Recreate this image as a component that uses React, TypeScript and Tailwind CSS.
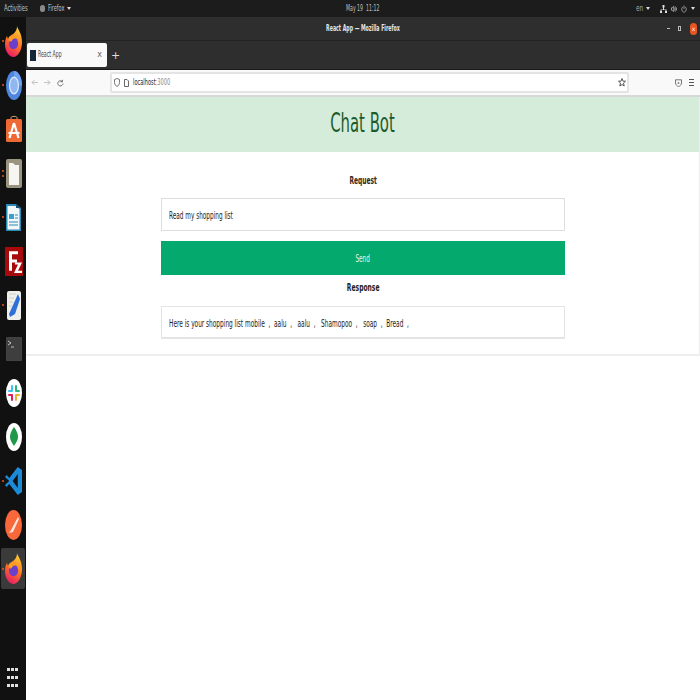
import { Volume2 } from 'lucide-react';

const font = { fontFamily: '"DejaVu Sans", sans-serif' } as const;

function FirefoxIcon() {
    return (
        <svg width="17" height="31" viewBox="0 0 24 32" preserveAspectRatio="none">
            <defs>
                <linearGradient id="ffg" x1="0.7" y1="0" x2="0.3" y2="1">
                    <stop offset="0" stopColor="#ffd23a" />
                    <stop offset="0.5" stopColor="#ff7a1f" />
                    <stop offset="1" stopColor="#e8176c" />
                </linearGradient>
            </defs>
            <path d="M17 0c1 4 7 7 7 17 0 8-6 15-12 15S0 26 0 19c0-4 1-7 3-9 0 2 1 3 2 3 1-3 5-4 7-5 3-2 5-4 5-8z" fill="url(#ffg)" />
            <ellipse cx="12" cy="18" rx="6.500" ry="6" fill="#6b3fc9" />
            <path d="M5 12c3-3 9-3 12 1-3-1-6 0-7 2-2 2-5 1-5-3z" fill="#ff9a26" />
        </svg>
    );
}

function ChromiumIcon() {
    return (
        <svg width="16" height="29" viewBox="0 0 18 28" preserveAspectRatio="none">
            <ellipse cx="9" cy="14" rx="9" ry="14" fill="#4f86e0" />
            <path d="M9 0C14 0 18 6 18 14L9 14z" fill="#6da0ee" />
            <ellipse cx="9" cy="14" rx="5" ry="8" fill="#8fb7f2" stroke="#d8e6fb" strokeWidth="1.400" />
        </svg>
    );
}

function AppStoreIcon() {
    return (
        <svg width="16" height="28" viewBox="0 0 16 28">
            <path d="M5 4V2.500C5 1 11 1 11 2.500V4" fill="none" stroke="#c9a27a" strokeWidth="1" />
            <rect y="4" width="16" height="23" rx="1.500" fill="#ee6a35" />
            <path d="M8 8 3.500 23M8 8l4.500 15M2.500 18h11" stroke="#fff" strokeWidth="2.200" fill="none" />
        </svg>
    );
}

function FilesIcon() {
    return (
        <svg width="16" height="29" viewBox="0 0 16 29">
            <rect width="16" height="29" rx="2" fill="#9a9481" />
            <path d="M3 4h4l2 2h4v20H3z" fill="#f6f5f2" />
        </svg>
    );
}

function WriterIcon() {
    return (
        <svg width="15" height="29" viewBox="0 0 15 29">
            <path d="M0 1h10l5 4v23H0z" fill="#2b89b5" />
            <path d="M1.500 3h8l4 3v20.500h-12z" fill="#f2f7fa" />
            <path d="M10 1l5 4h-5z" fill="#164e6f" />
            <rect x="3" y="11" width="5" height="5" fill="#3aa0cf" />
            <path d="M9 12h3M9 15h3M3 19h9M3 22h9" stroke="#2b89b5" strokeWidth="1.200" />
        </svg>
    );
}

function FileZillaIcon() {
    return (
        <svg width="18" height="29" viewBox="0 0 18 28" preserveAspectRatio="none">
            <rect width="18" height="28" fill="#a60a0a" />
            <path d="M4 4h9v3H7v5h5v3H7v8H4z" fill="#fff" />
            <path d="M10 15h7l-4 8h4v2H9l4-8h-3z" fill="#fff" />
        </svg>
    );
}

function EditorIcon() {
    return (
        <svg width="14" height="29" viewBox="0 0 14 29">
            <rect width="14" height="29" rx="2" fill="#eeeeea" />
            <path d="M2 3h7M2 7h5M2 11h4M2 15h3" stroke="#c9c9c4" strokeWidth="0.800" />
            <path d="M2 23l1 3 5-3 5-15-2-5z" fill="#2f6fd6" />
        </svg>
    );
}

function TerminalIcon() {
    return (
        <svg width="16" height="24" viewBox="0 0 16 24">
            <rect width="16" height="24" rx="2" fill="#3e3e3e" stroke="#555" strokeWidth="0.500" />
            <path d="M2 4l3 2-3 2" fill="none" stroke="#ddd" strokeWidth="0.800" />
            <path d="M5 10h3" stroke="#ddd" strokeWidth="0.800" />
        </svg>
    );
}

function SlackIcon() {
    return (
        <svg width="16" height="28" viewBox="0 0 16 28">
            <ellipse cx="8" cy="14" rx="8" ry="14" fill="#fff" />
            <path d="M6 7v5M3 12h3" stroke="#36c5f0" strokeWidth="2" strokeLinecap="round" />
            <path d="M10 7v5M10 12h3" stroke="#2eb67d" strokeWidth="2" strokeLinecap="round" />
            <path d="M3 16h3M6 16v5" stroke="#e01e5a" strokeWidth="2" strokeLinecap="round" />
            <path d="M10 16h3M10 16v5" stroke="#ecb22e" strokeWidth="2" strokeLinecap="round" />
        </svg>
    );
}

function MongoIcon() {
    return (
        <svg width="16" height="28" viewBox="0 0 16 28">
            <ellipse cx="8" cy="14" rx="8" ry="14" fill="#fff" />
            <path d="M8 4c3 4 4 7 4 10s-2 6-4 9c-2-3-4-6-4-9s1-6 4-10z" fill="#1f9a4a" />
        </svg>
    );
}

function VsCodeIcon() {
    return (
        <svg width="17" height="28" viewBox="0 0 20 28" preserveAspectRatio="none">
            <path d="M15 0l5 3v22l-5 3L5 17l-3 3-2-2 5-4-5-4 2-2 3 3z" fill="#1d8ad8" />
            <path d="M15 7v14l-6-7z" fill="#111" />
        </svg>
    );
}

function PostmanIcon() {
    return (
        <svg width="17" height="30" viewBox="0 0 17 30">
            <ellipse cx="8.500" cy="15" rx="8.500" ry="15" fill="#f9683a" />
            <path d="M13 7 6 20l-2 3 4-1 6-13z" fill="#fde5da" />
        </svg>
    );
}

const dockItems = [
    { icon: <ChromiumIcon />, dots: 1 },
    { icon: <AppStoreIcon />, dots: 0 },
    { icon: <FilesIcon />, dots: 2 },
    { icon: <WriterIcon />, dots: 1 },
    { icon: <FileZillaIcon />, dots: 0 },
    { icon: <EditorIcon />, dots: 1 },
    { icon: <TerminalIcon />, dots: 0 },
    { icon: <SlackIcon />, dots: 0 },
    { icon: <MongoIcon />, dots: 0 },
    { icon: <VsCodeIcon />, dots: 1 },
    { icon: <PostmanIcon />, dots: 0 },
];

function DockItem({ icon, dots }: { icon: React.ReactNode; dots: number }) {
    return (
        <div className="relative h-[44px] flex items-center justify-center">
            {dots > 0 && (
                <div className="absolute left-[1px] top-0 bottom-0 flex flex-col justify-center gap-[3px]">
                    {Array.from({ length: dots }).map((_, i) => (
                        <div key={i} className="w-[2px] h-[2px] rounded-full bg-[#e95420]" />
                    ))}
                </div>
            )}
            {icon}
        </div>
    );
}

function Dock() {
    return (
        <aside className="w-[26px] shrink-0 bg-[#111111] flex flex-col pl-[1px] pt-[2px]">
            <DockItem icon={<FirefoxIcon />} dots={1} />
            {dockItems.map((item, i) => (
                <DockItem key={i} icon={item.icon} dots={item.dots} />
            ))}
            <div className="relative mt-[1px] h-[41px] w-[24px] rounded-[2px] bg-[#3a3a3a] flex items-center justify-center">
                <div className="absolute left-[1px] w-[2px] h-[2px] rounded-full bg-[#e95420]" />
                <FirefoxIcon />
            </div>
            <div className="mt-auto mb-[13px] ml-[6px] grid grid-cols-3 w-[11px] gap-x-[1px] gap-y-[5px]">
                {Array.from({ length: 9 }).map((_, i) => (
                    <div key={i} className="w-[3px] h-[3px] bg-[#e0e0e0]" />
                ))}
            </div>
        </aside>
    );
}

function TopBar() {
    return (
        <header className="h-[17px] shrink-0 bg-[#1c1c1c] flex items-center text-[8px] text-[#c0c0c0] pl-[4px] pr-[5px] relative">
            <span className="inline-block w-[24px] origin-left scale-x-[.65] whitespace-pre">Activities</span>
            <span className="ml-[12px] w-[5px] h-[7px] rounded-full bg-[#8a8a8a]" />
            <span className="ml-[3px] inline-block w-[17px] origin-left scale-x-[.62] whitespace-pre">Firefox</span>
            <span className="ml-[2px] w-0 h-0 border-x-[2px] border-t-[3px] border-x-transparent border-t-[#ddd]" />
            <span className="absolute left-[26px] right-0 text-center">
                <span className="inline-block scale-x-[.58] whitespace-pre">May 19  11:12</span>
            </span>
            <span className="ml-auto inline-block w-[9px] origin-left scale-x-[.72] text-[#aaa]">en</span>
            <span className="ml-[1px] w-0 h-0 border-x-[2px] border-t-[3px] border-x-transparent border-t-[#ddd]" />
            <svg className="ml-[10px]" width="7" height="8" viewBox="0 0 7 8"><path d="M2.500 0h2v2.500h-2zM3 2.500h1v2H6.500V6H7v2H5V6h.5V5h-4v1H2v2H0V6h.5V4.500H3z" fill="#ddd" /></svg>
            <Volume2 className="ml-[4px] w-[6px] h-[8px] text-[#ccc]" strokeWidth={2.500} preserveAspectRatio="none" />
            <svg className="ml-[4px]" width="6" height="8" viewBox="0 0 8 8" preserveAspectRatio="none"><path d="M2.200 1.800a3 3 0 1 0 3.600 0M4 .500v3.500" fill="none" stroke="#bbb" strokeWidth="0.800" /></svg>
            <span className="ml-[4px] w-0 h-0 border-x-[2px] border-t-[3px] border-x-transparent border-t-[#ddd]" />
        </header>
    );
}

function BrowserChrome() {
    return (
        <>
            <div className="h-[24px] shrink-0 bg-[#2f2e2e] border-b border-[#222] flex items-center relative text-[8px] font-bold text-[#e5e5e5]">
                <span className="absolute left-0 right-0 text-center pt-[1px]">
                    <span className="inline-block scale-x-[.585] whitespace-pre">React App — Mozilla Firefox</span>
                </span>
                <div className="ml-auto flex items-center text-[#bbb] font-normal">
                    <span className="w-[3px] h-[1px] bg-[#bbb] mr-[8px]" />
                    <span className="w-[3px] h-[5px] border border-[#bbb] mr-[9px]" />
                    <span className="w-[7px] h-[12px] rounded-full bg-[#e95420] text-white text-[6px] flex items-center justify-center mr-[3px]">x</span>
                </div>
            </div>
            <div className="h-[29px] shrink-0 bg-[#2f2e2e] flex items-center border-b border-[#1a1a1a]">
                <div className="ml-[1px] w-[80px] h-[24px] bg-[#f9f9fa] rounded-[2px] flex items-center text-[8px] text-[#444] pl-[3px] pr-[5px]">
                    <span className="w-[6px] h-[11px] bg-[#14283a] mr-[2px]" />
                    <span className="inline-block w-[30px] origin-left scale-x-[.58] whitespace-pre">React App</span>
                    <span className="ml-auto text-[#666]">x</span>
                </div>
                <span className="ml-[4px] text-[11px] leading-none text-[#ddd]">+</span>
            </div>
            <div className="h-[27px] shrink-0 bg-[#f9f9fa] border-b-2 border-[#d8d8d8] flex items-center">
                <svg className="ml-[5px]" width="7" height="7" viewBox="0 0 7 7"><path d="M7 3.500H1M3.500 1 1 3.500 3.500 6" fill="none" stroke="#b5b5b5" strokeWidth="0.800" /></svg>
                <svg className="ml-[6px]" width="7" height="7" viewBox="0 0 7 7"><path d="M0 3.500h6M3.500 1 6 3.500 3.500 6" fill="none" stroke="#b5b5b5" strokeWidth="0.800" /></svg>
                <svg className="ml-[6px]" width="7" height="8" viewBox="0 0 7 8"><path d="M6 4.500a2.600 2.600 0 1 1-1-2.200M5.500.800v2h-2" fill="none" stroke="#555" strokeWidth="0.800" /></svg>
                <div className="ml-[46px] w-[519px] h-[21px] bg-white border-2 border-[#e4e4e4] rounded-[2px] flex items-center text-[8px]">
                    <svg className="ml-[2px]" width="6" height="9" viewBox="0 0 6 9"><path d="M3 .500 5.500 1.500V4.500C5.500 6.500 4 8 3 8.500 2 8 .500 6.500.500 4.500V1.500z" fill="none" stroke="#555" strokeWidth="0.800" /></svg>
                    <svg className="ml-[4px]" width="5" height="8" viewBox="0 0 5 8"><path d="M.500.500H3L4.500 2V7.500H.500z" fill="none" stroke="#444" strokeWidth="0.800" /></svg>
                    <span className="ml-[4px] inline-block w-[38px] origin-left scale-x-[.63] whitespace-pre">
                        <span className="text-[#222]">localhost</span>
                        <span className="text-[#888]">:3000</span>
                    </span>
                    <svg className="ml-auto mr-[1px]" width="8" height="9" viewBox="0 0 8 9"><path d="M4 .500 5 3.200H7.500L5.500 5 6.200 8 4 6.500 1.800 8 2.500 5 .500 3.200H3z" fill="none" stroke="#444" strokeWidth="0.900" /></svg>
                </div>
                <svg className="ml-[46px]" width="7" height="8" viewBox="0 0 7 8"><path d="M.500.800h6V4C6.500 6 4.500 7.300 3.500 7.700 2.500 7.300.500 6 .500 4z" fill="none" stroke="#666" strokeWidth="0.900" /><circle cx="3.500" cy="4" r="1" fill="#888" /></svg>
                <div className="ml-[7px] flex flex-col gap-[2px]">
                    <div className="w-[5px] h-[1px] bg-[#555]" />
                    <div className="w-[5px] h-[1px] bg-[#555]" />
                    <div className="w-[5px] h-[1px] bg-[#555]" />
                </div>
            </div>
        </>
    );
}

function ChatCard() {
    return (
        <div className="border-b-2 border-r border-[#eeeeee] bg-white">
            <div className="h-[55px] pb-[2px] bg-[#d5ecdb] flex items-center justify-center text-[26px] text-[#1e5b2b]">
                <span className="inline-block scale-x-[.572] whitespace-pre">Chat Bot</span>
            </div>
            <div className="w-[404px] ml-[135px] flex flex-col text-[10px] text-[#222]">
                <div className="h-[46px] pt-[23px] text-center font-bold text-[#2e2620] leading-[12px]">
                    <span className="inline-block scale-x-[.59] whitespace-pre">Request</span>
                </div>
                <div className="h-[33px] pt-[1px] border border-[#dedede] flex items-center pl-[7px]">
                    <span className="inline-block w-[100px] origin-left scale-x-[.576] whitespace-pre">Read my shopping list</span>
                </div>
                <button className="mt-[10px] h-[34px] pt-[1px] bg-[#04a96d] text-[#e8f6ef] text-[10px]">
                    <span className="inline-block scale-x-[.567] whitespace-pre">Send</span>
                </button>
                <div className="h-[31px] pt-[7px] text-center font-bold text-[#1c1c1c] leading-[12px]">
                    <span className="inline-block scale-x-[.6] whitespace-pre">Response</span>
                </div>
                <div className="h-[33px] pt-[2px] border border-b-2 border-[#e4e4e4] flex items-center pl-[7px]">
                    <span className="inline-block w-[372px] origin-left scale-x-[.582] whitespace-pre">
                        {'Here is your shopping list mobile  ,  aalu  ,   aalu  ,   Shamopoo  ,   soap  ,  Bread  ,'}
                    </span>
                </div>
            </div>
            <div className="h-[15px]" />
        </div>
    );
}

export default function App() {
    return (
        <div className="h-[700px] w-[700px] overflow-hidden flex flex-col bg-white" style={font}>
            <TopBar />
            <div className="flex-1 flex min-h-0">
                <Dock />
                <main className="flex-1 flex flex-col min-w-0">
                    <BrowserChrome />
                    <ChatCard />
                </main>
            </div>
        </div>
    );
}
